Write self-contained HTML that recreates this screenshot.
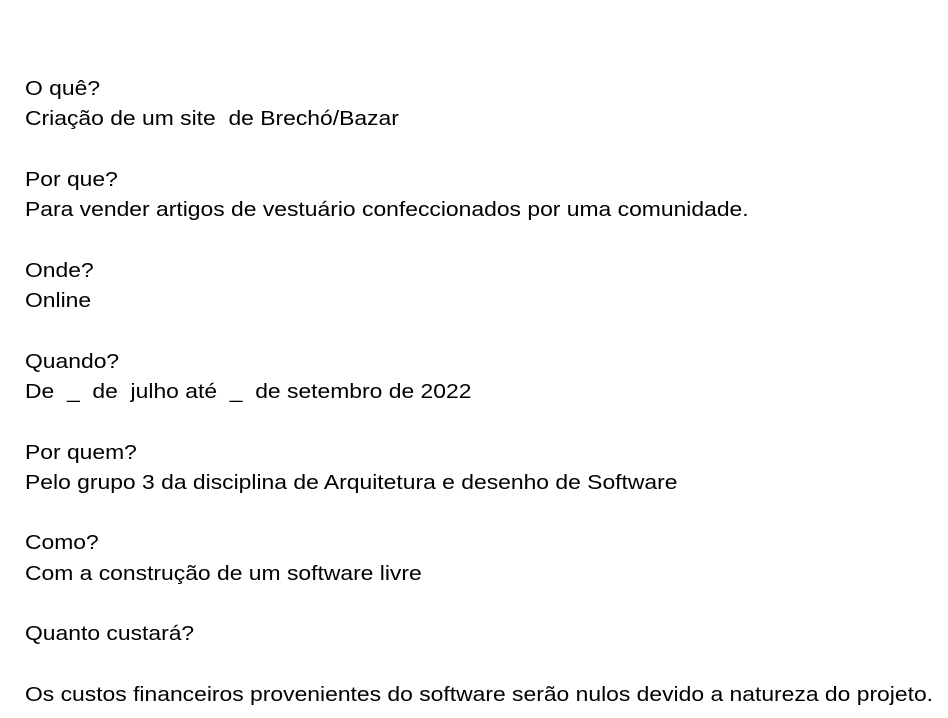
<!DOCTYPE html>
<html><head><meta charset="utf-8"><style>
html,body{margin:0;padding:0;background:#fff;width:948px;height:718px;overflow:hidden}
.t{position:absolute;left:25px;top:74px;font-family:"Liberation Sans",Arial,sans-serif;font-size:20.5px;line-height:30.3px;color:#000;white-space:pre;transform:scaleX(1.116);transform-origin:0 0}
</style></head><body>
<div class="t">O quê?
Criação de um site  de Brechó/Bazar

Por que?
Para vender artigos de vestuário confeccionados por uma comunidade.

Onde?
Online

Quando?
De  _  de  julho até  _  de setembro de 2022

Por quem?
Pelo grupo 3 da disciplina de Arquitetura e desenho de Software

Como?
Com a construção de um software livre

Quanto custará?

Os custos financeiros provenientes do software serão nulos devido a natureza do projeto.</div>
</body></html>
